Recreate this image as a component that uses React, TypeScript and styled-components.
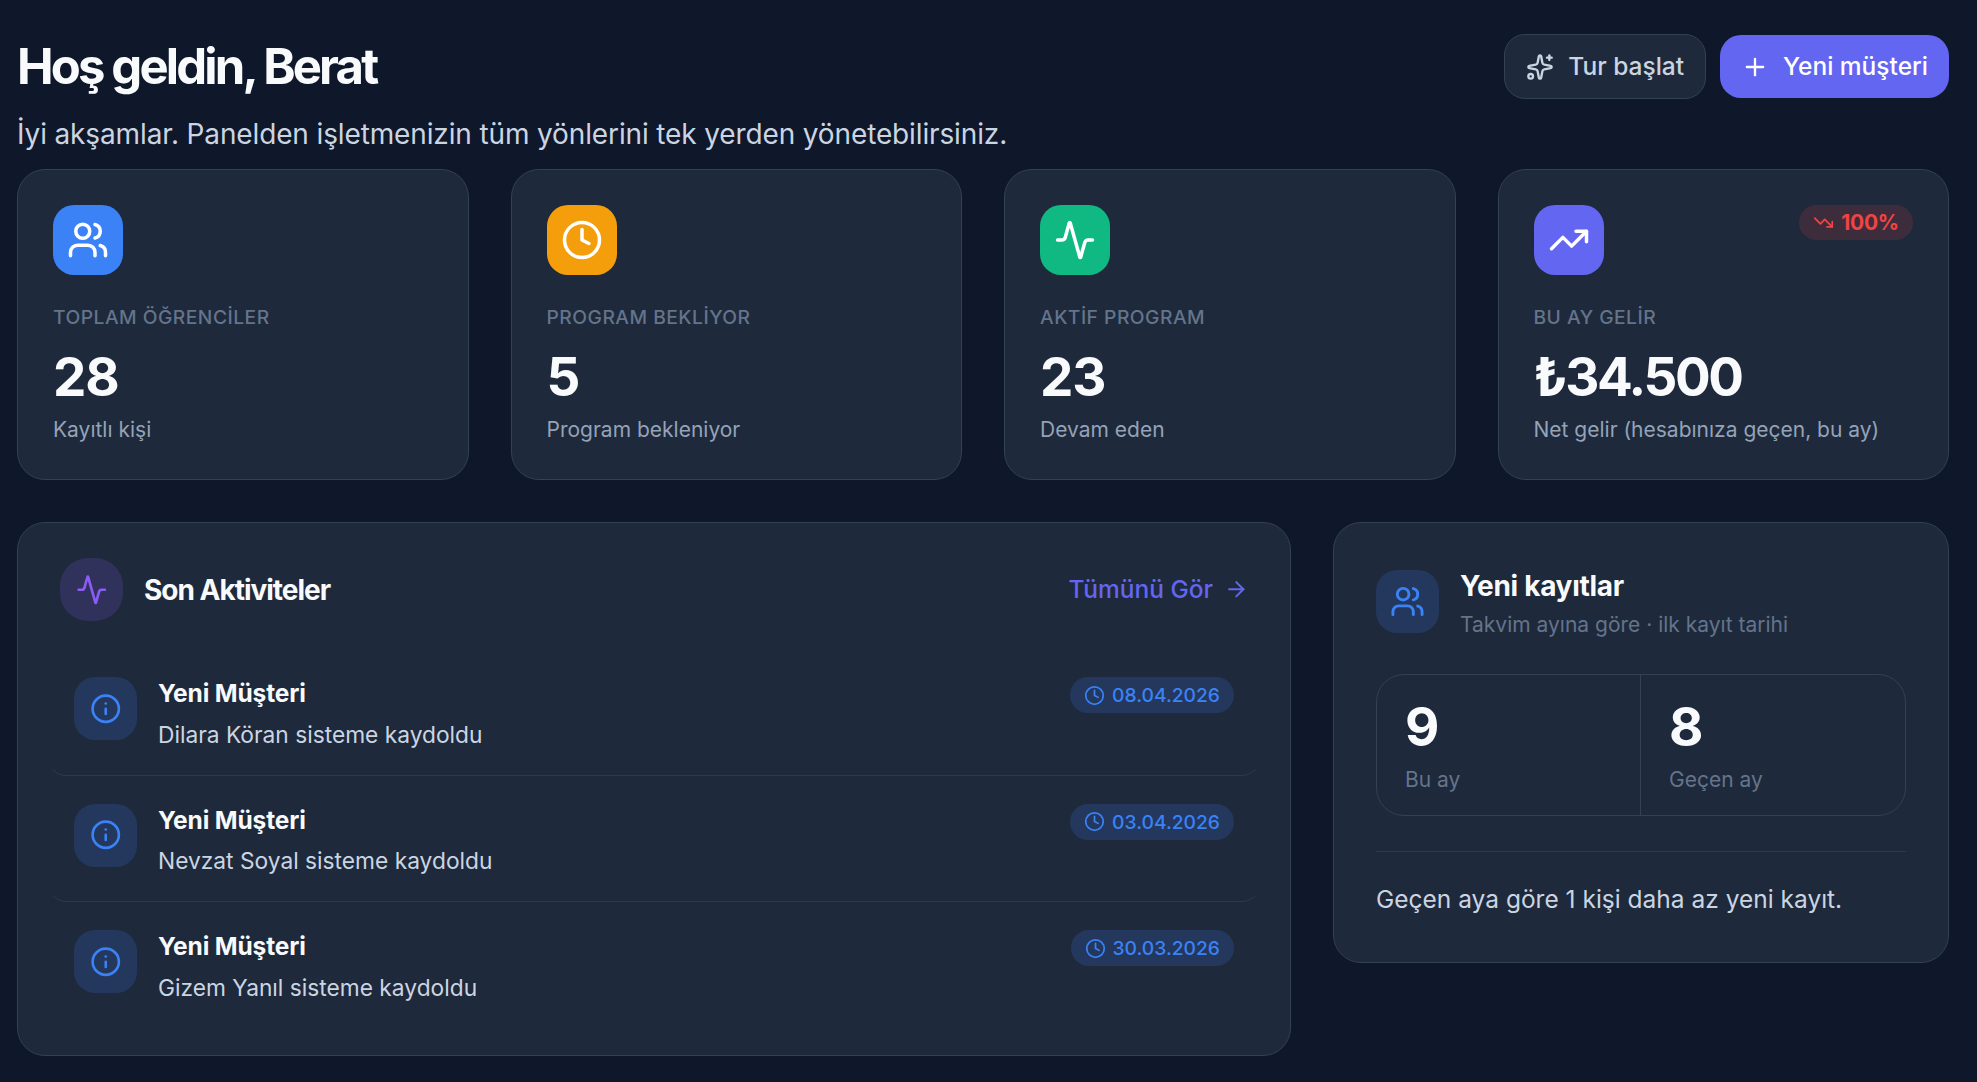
import React from "react";
import styled, { createGlobalStyle } from "styled-components";
import {
  Activity,
  ArrowRight,
  Clock,
  Info,
  Plus,
  Sparkles,
  TrendingDown,
  TrendingUp,
  Users,
} from "lucide-react";

const GlobalStyle = createGlobalStyle`
  *, *::before, *::after { box-sizing: border-box; }
  body {
    margin: 0;
    background: #0f172a;
    font-family: Inter, "Liberation Sans", sans-serif;
    color: #f8fafc;
  }
  h1, h2, h3, p { margin: 0; }
  svg { display: block; flex: none; }
`;

const Page = styled.main`
  height: 1082px;
  overflow: hidden;
  padding: 34px 28px 0 17px;
  background: #0f172a;
`;

const Header = styled.header`
  display: flex;
  justify-content: space-between;
  align-items: flex-start;
  height: 135px;
`;

const Greeting = styled.h1`
  font-size: 49px;
  line-height: 59px;
  font-weight: 650;
  letter-spacing: -0.058em;
  margin-top: 3px;
`;

const Lead = styled.p`
  font-size: 28px;
  line-height: 42px;
  margin-top: 17px;
  letter-spacing: -0.0047em;
  color: #cbd5e1;
`;

const Actions = styled.div`
  display: flex;
  align-items: center;
  gap: 14px;
`;

const Button = styled.button<{ $primary?: boolean }>`
  display: flex;
  align-items: center;
  gap: 14px;
  height: ${(p) => (p.$primary ? 63 : 65)}px;
  padding: 0 21px;
  border: ${(p) => (p.$primary ? "0" : "1px solid #334155")};
  border-radius: 21px;
  background: ${(p) => (p.$primary ? "#6366f1" : "#1e293b")};
  color: ${(p) => (p.$primary ? "#ffffff" : "#cbd5e1")};
  font: 500 24.5px/1.2 Inter, "Liberation Sans", sans-serif;
  white-space: nowrap;
`;

const Stats = styled.section`
  display: grid;
  grid-template-columns: repeat(4, 1fr);
  gap: 42px;
`;

const Card = styled.article`
  background: #1e293b;
  border: 1px solid #334155;
  border-radius: 28px;
`;

const StatCard = styled(Card)`
  height: 311px;
  padding: 35px;
`;

const StatTop = styled.div`
  display: flex;
  justify-content: space-between;
  align-items: flex-start;
`;

const StatIcon = styled.div<{ $color: string }>`
  display: grid;
  place-items: center;
  width: 70px;
  height: 70px;
  border-radius: 21px;
  background: ${(p) => p.$color};
  color: #ffffff;
`;

const Trend = styled.span`
  display: flex;
  align-items: center;
  gap: 7px;
  height: 35px;
  padding: 0 14px;
  border-radius: 18px;
  background: rgba(239, 68, 68, 0.15);
  color: #ef4444;
  font-size: 21px;
  font-weight: 700;
  letter-spacing: -0.01em;
`;

const StatLabel = styled.p`
  margin-top: 28px;
  font-size: 19.25px;
  line-height: 29px;
  font-weight: 500;
  letter-spacing: 0.025em;
  color: #64748b;
`;

const BigNumber = styled.p<{ $tight?: boolean }>`
  font-size: 53px;
  line-height: 58px;
  font-weight: 650;
  letter-spacing: ${(p) => (p.$tight ? "-0.046em" : "-0.02em")};
`;

const StatValue = styled(BigNumber)`
  margin-top: 16px;
`;

const StatNote = styled.p`
  margin-top: 8px;
  font-size: 21px;
  line-height: 32px;
  color: #94a3b8;
`;

const Panels = styled.section`
  display: grid;
  grid-template-columns: 1274px 616px;
  gap: 42px;
  align-items: start;
  margin-top: 42px;
`;

const ActivityPanel = styled(Card)`
  height: 534px;
  padding: 35px 28px 0;
`;

const PanelHead = styled.div`
  display: flex;
  align-items: center;
  height: 63px;
  padding: 0 14px;
  gap: 21px;
`;

const IconTile = styled.div<{ $tone?: "violet" | "blue" }>`
  display: grid;
  place-items: center;
  flex: none;
  width: 63px;
  height: 63px;
  border-radius: ${(p) => (p.$tone === "violet" ? 28 : 21)}px;
  background: ${(p) =>
    p.$tone === "violet" ? "rgba(139, 92, 246, 0.18)" : "rgba(59, 130, 246, 0.18)"};
  color: ${(p) => (p.$tone === "violet" ? "#8b5cf6" : "#3b82f6")};
`;

const PanelTitle = styled.h2<{ $tight?: boolean }>`
  font-size: 28px;
  line-height: 36px;
  font-weight: 700;
  letter-spacing: ${(p) => (p.$tight ? "-0.036em" : "-0.011em")};
`;

const SeeAll = styled.a`
  display: flex;
  align-items: center;
  gap: 10.5px;
  margin-left: auto;
  font-size: 24.5px;
  line-height: 30px;
  font-weight: 500;
  color: #6366f1;
  margin-bottom: 1px;
`;

const ActivityList = styled.div`
  margin-top: 28px;
`;

const ActivityRow = styled.div`
  display: flex;
  align-items: flex-start;
  gap: 21px;
  height: 126.5px;
  padding: 27px 27px 0;
  border: 1px solid transparent;
  border-bottom-color: rgba(51, 65, 85, 0.7);
  border-radius: 21px;
  &:last-child { border-bottom-color: transparent; }
`;

const RowTitle = styled.h3`
  font-size: 24.5px;
  line-height: 32px;
  font-weight: 700;
  letter-spacing: -0.006em;
`;

const RowText = styled.p`
  margin-top: 8.8px;
  font-size: 22.75px;
  line-height: 34px;
  color: #cbd5e1;
`;

const DateBadge = styled.span`
  display: flex;
  align-items: center;
  gap: 7px;
  height: 36px;
  margin-left: auto;
  padding: 0 14px;
  border-radius: 18px;
  background: rgba(59, 130, 246, 0.18);
  color: #3b82f6;
  font-size: 19.25px;
  font-weight: 500;
`;

const SignupPanel = styled(Card)`
  height: 441px;
  padding: 41px 42px 0;
`;

const SignupHead = styled.div`
  display: flex;
  align-items: center;
  gap: 21px;
  height: 75px;
`;

const SignupTitles = styled.div`
  padding-top: 6px;
`;

const Muted = styled.p`
  font-size: 21px;
  line-height: 32px;
  color: #64748b;
`;

const HeadNote = styled(Muted)`
  margin-top: 5px;
`;

const Compare = styled.div`
  display: grid;
  grid-template-columns: 263px 1fr;
  height: 142px;
  margin-top: 35px;
  border: 1px solid #334155;
  border-radius: 28px;
`;

const CompareCell = styled.div`
  padding: 23px 28px 0;
  & + & { border-left: 1px solid #334155; }
`;

const CompareNote = styled(Muted)`
  margin-top: 8px;
`;

const Summary = styled.p`
  margin-top: 35px;
  padding-top: 28px;
  border-top: 1px solid rgba(51, 65, 85, 0.7);
  font-size: 24.5px;
  line-height: 39px;
  color: #cbd5e1;
`;

const stats = [
  { icon: Users, color: "#3b82f6", label: "TOPLAM ÖĞRENCİLER", value: "28", note: "Kayıtlı kişi" },
  { icon: Clock, color: "#f59e0b", label: "PROGRAM BEKLİYOR", value: "5", note: "Program bekleniyor" },
  { icon: Activity, color: "#10b981", label: "AKTİF PROGRAM", value: "23", note: "Devam eden" },
  {
    icon: TrendingUp,
    color: "#6366f1",
    label: "BU AY GELİR",
    value: "₺34.500",
    note: "Net gelir (hesabınıza geçen, bu ay)",
    trend: "100%",
  },
];

const activities = [
  { name: "Dilara Köran", date: "08.04.2026" },
  { name: "Nevzat Soyal", date: "03.04.2026" },
  { name: "Gizem Yanıl", date: "30.03.2026" },
];

export default function App() {
  return (
    <Page>
      <GlobalStyle />
      <Header>
        <div>
          <Greeting>Hoş geldin, Berat</Greeting>
          <Lead>İyi akşamlar. Panelden işletmenizin tüm yönlerini tek yerden yönetebilirsiniz.</Lead>
        </div>
        <Actions>
          <Button>
            <Sparkles size={28} strokeWidth={2} />
            Tur başlat
          </Button>
          <Button $primary>
            <Plus size={28} strokeWidth={2} />
            Yeni müşteri
          </Button>
        </Actions>
      </Header>

      <Stats>
        {stats.map(({ icon: Icon, ...s }) => (
          <StatCard key={s.label}>
            <StatTop>
              <StatIcon $color={s.color}>
                <Icon size={42} />
              </StatIcon>
              {s.trend && (
                <Trend>
                  <TrendingDown size={21} />
                  {s.trend}
                </Trend>
              )}
            </StatTop>
            <StatLabel>{s.label}</StatLabel>
            <StatValue $tight={s.value.length > 3}>{s.value}</StatValue>
            <StatNote>{s.note}</StatNote>
          </StatCard>
        ))}
      </Stats>

      <Panels>
        <ActivityPanel>
          <PanelHead>
            <IconTile $tone="violet">
              <Activity size={31.5} />
            </IconTile>
            <PanelTitle $tight>Son Aktiviteler</PanelTitle>
            <SeeAll>
              Tümünü Gör
              <ArrowRight size={24.5} />
            </SeeAll>
          </PanelHead>
          <ActivityList>
            {activities.map((a) => (
              <ActivityRow key={a.name}>
                <IconTile>
                  <Info size={31.5} />
                </IconTile>
                <div>
                  <RowTitle>Yeni Müşteri</RowTitle>
                  <RowText>{a.name} sisteme kaydoldu</RowText>
                </div>
                <DateBadge>
                  <Clock size={21} />
                  {a.date}
                </DateBadge>
              </ActivityRow>
            ))}
          </ActivityList>
        </ActivityPanel>

        <SignupPanel>
          <SignupHead>
            <IconTile>
              <Users size={35} />
            </IconTile>
            <SignupTitles>
              <PanelTitle>Yeni kayıtlar</PanelTitle>
              <HeadNote>Takvim ayına göre · ilk kayıt tarihi</HeadNote>
            </SignupTitles>
          </SignupHead>
          <Compare>
            <CompareCell>
              <BigNumber>9</BigNumber>
              <CompareNote>Bu ay</CompareNote>
            </CompareCell>
            <CompareCell>
              <BigNumber>8</BigNumber>
              <CompareNote>Geçen ay</CompareNote>
            </CompareCell>
          </Compare>
          <Summary>Geçen aya göre 1 kişi daha az yeni kayıt.</Summary>
        </SignupPanel>
      </Panels>
    </Page>
  );
}
